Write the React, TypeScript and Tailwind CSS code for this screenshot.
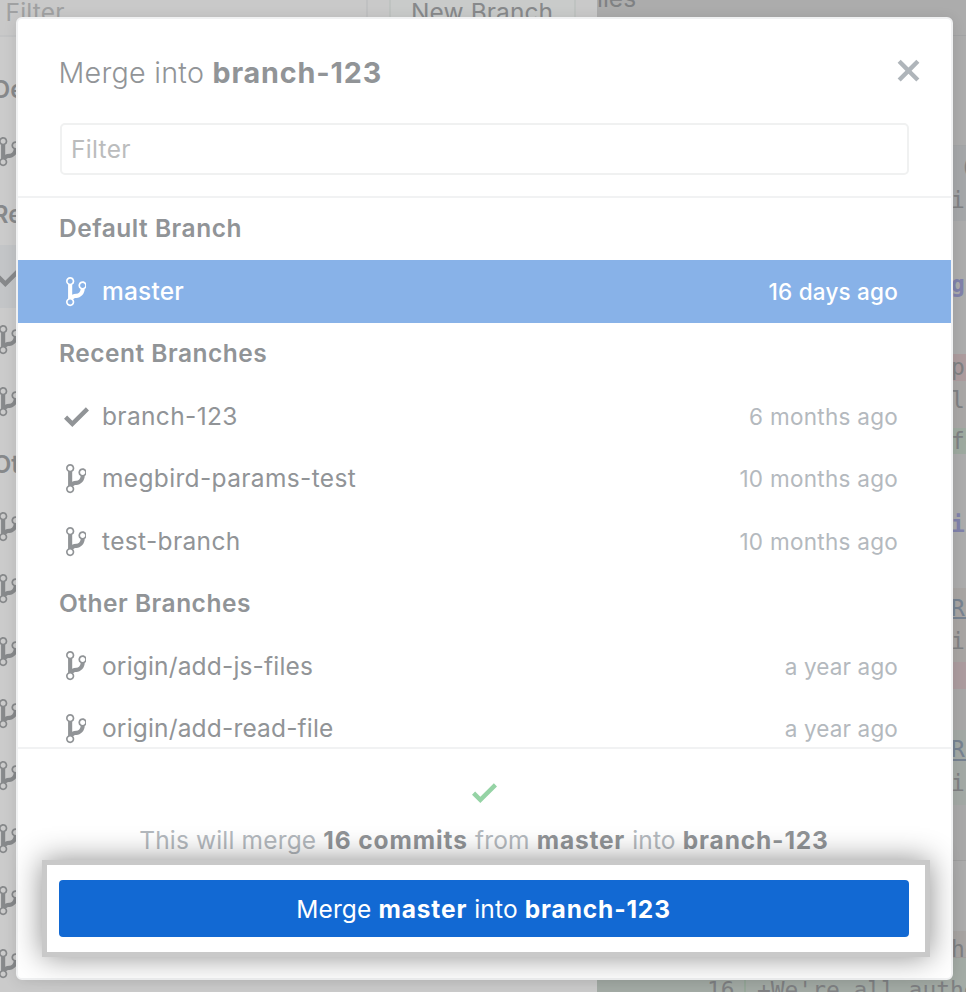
import React from "react";

const BRANCH =
  "M10 5c0-1.11-.89-2-2-2a1.993 1.993 0 0 0-1 3.72v.3c-.02.52-.23.98-.63 1.38-.4.4-.86.61-1.38.63-.83.02-1.48.16-2 .45V4.72a1.993 1.993 0 0 0-1-3.72C.88 1 0 1.89 0 3a2 2 0 0 0 1 1.72v6.56c-.59.35-1 .99-1 1.72 0 1.11.89 2 2 2 1.11 0 2-.89 2-2 0-.53-.2-1-.53-1.36.09-.06.48-.41.59-.47.25-.11.56-.17.94-.17 1.05-.05 1.95-.45 2.75-1.25S8.95 7.77 9 6.73h-.02C9.59 6.37 10 5.73 10 5zM2 1.8c.66 0 1.2.55 1.2 1.2 0 .65-.55 1.2-1.2 1.2C1.35 4.2.8 3.65.8 3c0-.65.55-1.2 1.2-1.2zm0 12.41c-.66 0-1.2-.55-1.2-1.2 0-.65.55-1.2 1.2-1.2.65 0 1.2.55 1.2 1.2 0 .65-.55 1.2-1.2 1.2zm6-8c-.66 0-1.2-.55-1.2-1.2 0-.65.55-1.2 1.2-1.2.65 0 1.2.55 1.2 1.2 0 .65-.55 1.2-1.2 1.2z";

function BranchIcon() {
  return (
    <svg viewBox="0 0 10 16" className="h-[33.3px] w-[20.8px] shrink-0" fill="currentColor">
      <path fillRule="evenodd" d={BRANCH} />
    </svg>
  );
}

function CheckIcon() {
  return (
    <svg viewBox="0 0 12 16" className="h-[33.3px] w-[25px] shrink-0" fill="currentColor">
      <path d="M12 5l-8 8-4-4L1.5 7.5 4 10l6.5-6.5z" />
    </svg>
  );
}

function CloseIcon() {
  return (
    <svg viewBox="0 0 12 16" className="h-[33.3px] w-[25px]" fill="currentColor">
      <path d="M7.48 8l3.75 3.75-1.48 1.48L6 9.48l-3.75 3.75-1.48-1.48L4.52 8 .77 4.25l1.48-1.48L6 6.52l3.75-3.75 1.48 1.48z" />
    </svg>
  );
}

function Heading({ children }: { children: React.ReactNode }) {
  return (
    <div className="flex h-[62.4px] shrink-0 items-center pb-px pl-[41px] text-[24.5px] font-semibold tracking-[0.5px] text-[#919497]">
      {children}
    </div>
  );
}

type RowProps = { name: string; when: string; current?: boolean; selected?: boolean; remote?: boolean };

function Row({ name, when, current, selected, remote }: RowProps) {
  return (
    <div
      className={
        selected
          ? "flex h-[62.4px] shrink-0 items-center bg-[#88b2e8] pr-[53px] pl-[45px] font-medium text-white"
          : "flex h-[62.4px] shrink-0 items-center pr-[53px] pl-[45px] text-[#919497]"
      }
    >
      <span className={current ? "flex w-[39px] shrink-0 items-center pl-px" : "flex w-[39px] shrink-0 items-center pl-[2.7px]"}>
        {current ? <CheckIcon /> : <BranchIcon />}
      </span>
      <span
        className={
          selected
            ? "flex-1 text-[24.5px] tracking-[0.2px] whitespace-nowrap"
            : remote
              ? "flex-1 text-[24.5px] tracking-[0.17px] whitespace-nowrap"
              : "flex-1 text-[24.5px] tracking-[0.35px] whitespace-nowrap"
        }
      >
        {name}
      </span>
      <span
        className={
          selected
            ? "text-[22.5px] tracking-[0.2px]"
            : remote
              ? "pt-px text-[22.5px] tracking-[0.15px] text-[#b4b9be]"
              : "pt-px text-[22.5px] tracking-[0.28px] text-[#b4b9be]"
        }
      >
        {when}
      </span>
    </div>
  );
}

const behindRows = ["De", "b", "Re", "c", "b", "b", "Ot", "b", "b", "b", "b", "b", "b", "b", "b"];

function BranchesPanel() {
  return (
    <div className="flex w-[597px] shrink-0 flex-col bg-[#cbcbcb] text-[#87898b]">
      <div className="flex h-[37px] shrink-0 border-b-2 border-[#c3c4c5] bg-[#c9c9c9]">
        <div className="-mt-[2px] w-[368px] border-r-2 border-[#c0c1c2] pl-[5.5px] text-[24.5px] leading-[28px] tracking-[0.2px] text-[#a0a1a2]">
          Filter
        </div>
        <div className="ml-[21px] w-[187px] border-x-2 border-[#bfc3c1] bg-[#c9cbca] pl-[20px]">
          <div className="-mt-[2px] text-[24.5px] leading-[28px] tracking-[0.1px] whitespace-nowrap text-[#87898b]">
            New Branch
          </div>
        </div>
      </div>
      <div className="flex flex-col pt-[21px]">
        {behindRows.map((kind, i) => (
          <div
            key={i}
            className={
              kind === "c"
                ? "flex h-[62.4px] shrink-0 items-center bg-[#c3c5c7]"
                : "flex h-[62.4px] shrink-0 items-center pt-px"
            }
          >
            {kind === "b" && <span className="-ml-px flex"><BranchIcon /></span>}
            {kind === "c" && <span className="-ml-[3px] flex pt-px"><CheckIcon /></span>}
            {kind.length === 2 && <span className="-ml-[7.5px] text-[24.5px] font-semibold">{kind}</span>}
          </div>
        ))}
      </div>
    </div>
  );
}

function DiffPanel() {
  const line = "flex shrink-0 items-center overflow-hidden pl-[354px] whitespace-pre";
  return (
    <div className="flex w-[369px] shrink-0 flex-col overflow-hidden bg-[#acacac] font-['DejaVu_Sans_Mono',monospace] text-[22.9px] leading-none text-[#7f8183]">
      <div className="h-9 shrink-0 border-b border-[#a3a4a5] font-[Inter,sans-serif] text-[24.5px]">
        <div className="-mt-[14px]">iles</div>
      </div>
      <div className="h-[110px] shrink-0 border-b border-[#a3a5a6]" />
      <div className="flex h-[75px] shrink-0 flex-col bg-[#a5a7a9]">
        <div className="h-[36px] shrink-0 overflow-hidden pt-[10px] pl-[363px]">(</div>
        <div className="pl-[354px] pt-[7px]">if</div>
      </div>
      <div className={line + " h-[133px] pb-[7px] font-bold text-[#8082ab]"}>g</div>
      <div className={line + " h-[27px] bg-[#ad9c9e]"}>p</div>
      <div className={line + " h-[47px] bg-[#a9a7a6] pb-[9px]"}>l</div>
      <div className={line + " h-[26px] bg-[#9eaaa0]"}>fo</div>
      <div className={line + " h-[134px] pt-[6px] font-bold text-[#8082ab]"}>in</div>
      <div className="h-[74px] shrink-0 bg-[#a8a5a3] pl-[354px]">
        <div className="h-[31px] border-b-2 border-[#778391] pt-[9px] text-[#778391]">R</div>
        <div className="pt-[11px]">in</div>
      </div>
      <div className="h-[27px] shrink-0 bg-[#ac9c9f]" />
      <div className="h-[41px] shrink-0 bg-[#a8a7a7]" />
      <div className="h-[75px] shrink-0 bg-[#a3a9a5] pl-[354px]">
        <div className="h-[31px] border-b-2 border-[#778391] pt-2 text-[#778391]">R</div>
        <div className="pt-[11px]">in</div>
      </div>
      <div className="h-[56px] shrink-0 border-b border-[#a0a0a0] bg-[#a9a9a9]" />
      <div className="h-[70px] shrink-0" />
      <div className={line + " h-[27px] border-b border-[#a19e9c] bg-[#a8a5a3] pt-[11px]"}>he</div>
      <div className="flex h-[34px] shrink-0 overflow-hidden bg-[#a3aba5]">
        <span className="w-[149px] shrink-0 border-r-2 border-[#96a799] pt-[21px] pl-[110px]">16</span>
        <span className="pt-[21px] pl-[11px] whitespace-nowrap">+We're all authors</span>
      </div>
    </div>
  );
}

export default function App() {
  return (
    <div className="relative flex h-[992px] w-[966px] overflow-hidden font-[Inter,sans-serif]">
      <BranchesPanel />
      <DiffPanel />
      <div className="absolute top-[17px] left-[16px] flex h-[963px] w-[937px] flex-col rounded-[6px] border-2 border-[#f0f1f2] bg-white shadow-[0_2px_14px_rgba(0,0,0,0.1)]">
        <div className="flex h-[104px] shrink-0 items-center justify-between pr-[30px] pl-[40.5px]">
          <h1 className="pt-[4px] text-[28.7px] font-[350] tracking-[0.25px] whitespace-nowrap text-[#919497]">
            Merge into <b className="font-bold tracking-[0.85px]">branch-123</b>
          </h1>
          <span className="text-[#afb5ba]"><CloseIcon /></span>
        </div>
        <div className="mr-[42px] ml-[41.5px] flex h-[52px] shrink-0 items-center rounded-[5px] border-2 border-[#f0f1f1] pl-[9.5px] text-[24.5px] tracking-[0.3px] text-[#bbbcbd]">
          Filter
        </div>
        <div className="mt-[21px] flex h-[553px] shrink-0 flex-col overflow-hidden border-y-2 border-[#f1f2f3]">
          <Heading>Default Branch</Heading>
          <Row name="master" when="16 days ago" selected />
          <Heading>Recent Branches</Heading>
          <Row name="branch-123" when="6 months ago" current />
          <Row name="megbird-params-test" when="10 months ago" />
          <Row name="test-branch" when="10 months ago" />
          <Heading>Other Branches</Heading>
          <Row name="origin/add-js-files" when="a year ago" remote />
          <Row name="origin/add-read-file" when="a year ago" remote />
        </div>
        <div className="flex flex-1 flex-col pt-[27px]">
          <span className="flex justify-center text-[#95d3a5]"><CheckIcon /></span>
          <p className="mt-[12px] h-[39px] pr-px text-center text-[24.5px] leading-[38px] tracking-[0.16px] whitespace-nowrap text-[#b4b9be]">
            This will merge <b className="font-bold tracking-[0.9px] text-[#919497]">16 commits</b> from{" "}
            <b className="font-bold tracking-[0.8px] text-[#919497]">master</b> into{" "}
            <b className="font-bold tracking-[0.85px] text-[#919497]">branch-123</b>
          </p>
          <div className="relative ml-6 h-[97px] w-[888px] shrink-0 border-[5px] border-[#c9c9c9] bg-white pt-[15px] pr-[16px] pl-[12px] shadow-[0_0_28px_rgba(0,0,0,0.45)]">
            <button className="block h-[57px] w-full rounded-[4px] bg-[#1269d3] pt-px pr-px text-[24.5px] tracking-[0.15px] whitespace-nowrap text-white">
              Merge <b className="font-bold tracking-[0.85px]">master</b> into{" "}
              <b className="font-bold tracking-[0.85px]">branch-123</b>
            </button>
          </div>
        </div>
      </div>
    </div>
  );
}
